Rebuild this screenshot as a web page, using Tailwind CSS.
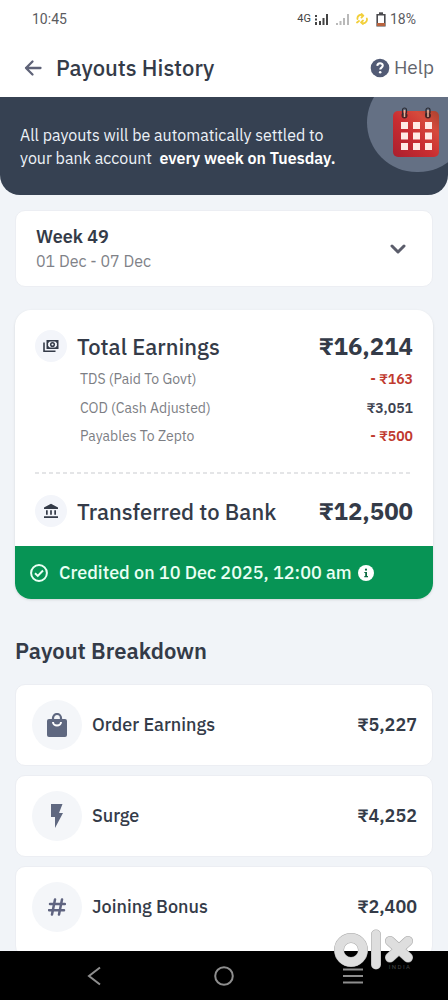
<!DOCTYPE html>
<html lang="en">
<head>
<meta charset="utf-8">
<meta name="viewport" content="width=device-width, initial-scale=1">
<title>Payouts History</title>
<script src="https://cdn.jsdelivr.net/npm/@tailwindcss/browser@4"></script>
</head>
<body class="flex h-screen flex-col overflow-hidden bg-[#f1f4f8] font-['IBM_Plex_Sans','Noto_Sans',sans-serif] text-[#343b48]">

<div class="flex h-[38px] shrink-0 items-center justify-between bg-white pr-8 pl-8 font-[Roboto,sans-serif] text-[14px] text-[#5b5b5f]">
  <span>10:45</span>
  <div class="flex items-center">
    <span class="text-[11px] text-[#444]">4G</span>
    <svg class="ml-1 h-3 w-[14px]" viewBox="0 0 14 12" fill="#444" aria-hidden="true"><path d="M0 2h2v2H0zM0 5.500h2v2H0zM0 9h2v3H0zM4 8h2v4H4zM7.500 5h2v7h-2zM11 1h2v11h-2z"/></svg>
    <svg class="ml-[7px] h-3 w-[13px]" viewBox="0 0 13 12" fill="#b9b9b9" aria-hidden="true"><path d="M0 10h2v2H0zM3.500 8h2v4h-2zM7 5h2v7H7zM11 1h2v11h-2z"/></svg>
    <svg class="ml-[7px] h-3 w-3" viewBox="0 0 12 12" fill="none" stroke="#f2cf3a" stroke-width="1.800" stroke-linecap="round" stroke-linejoin="round" aria-hidden="true"><path d="M1.500 6a3.500 3.500 0 0 1 5.500-3.500M5.500 1 7.300 2.700 5.500 4.500M10.800 5.500a3.500 3.500 0 0 1-5.500 3.800M7 7.500 5 9.300 7 11M1 9.500 3 8"/></svg>
    <svg class="ml-2 h-[15px] w-[10px]" viewBox="0 0 10 15" fill="none" aria-hidden="true"><path d="M1.200 2.700h7.600v11.100H1.200z" stroke="#4a4a4e" stroke-width="1.600"/><path d="M3 .3h4v2H3z" fill="#4a4a4e"/><path d="M1 11h8v3H1z" fill="#b8633e"/></svg>
    <span class="ml-1">18%</span>
  </div>
</div>

<header class="flex h-[59px] shrink-0 items-center justify-between bg-white pr-[14px] pl-6">
  <div class="flex items-center gap-[14px]">
    <button type="button" aria-label="Back"><svg class="h-[18px] w-[18px]" viewBox="0 0 18 18" fill="none" stroke="#5f6378" stroke-width="2.300" stroke-linecap="round" stroke-linejoin="round"><path d="M16.500 9H2M8.500 2.500 2 9l6.500 6.500"/></svg></button>
    <h1 class="text-[22px] leading-7 font-medium">Payouts History</h1>
  </div>
  <button type="button" class="flex items-center gap-1 text-[19px] text-[#63656d]">
    <svg class="h-5 w-5" viewBox="0 0 20 20" aria-hidden="true"><circle cx="10" cy="10" r="9.300" fill="#525b75"/><path d="M7.300 7.900c.1-3.500 5.500-3.400 5.500-.3 0 2-2.600 2-2.600 4" fill="none" stroke="#fff" stroke-width="2"/><circle cx="10.200" cy="14.300" r="1.250" fill="#fff"/></svg>
    Help
  </button>
</header>

<main class="min-h-0 flex-1 overflow-hidden">
  <section class="relative h-[98px] overflow-hidden rounded-b-[20px] bg-[#364152] px-5 pt-[27px] text-base leading-[23px] text-[#edf2f8]">
    <p>All payouts will be automatically settled to<br>your bank account &nbsp;<strong class="font-semibold text-white">every week on Tuesday.</strong></p>
    <div class="absolute -top-6 -right-5 h-[99px] w-[101px] rounded-full bg-[#647084]"></div>
    <svg class="absolute top-[9px] right-[9px] h-[52px] w-[46px]" viewBox="0 0 46 52" aria-hidden="true">
      <defs><linearGradient id="cal" x1="0" y1="1" x2="1" y2="0"><stop offset="0" stop-color="#a91f2e"/><stop offset=".45" stop-color="#c92d31"/><stop offset=".75" stop-color="#d64b3c"/><stop offset="1" stop-color="#a8422f"/></linearGradient></defs>
      <rect y="5" width="46" height="46" rx="5" fill="url(#cal)"/>
      <g fill="#ffeae4"><path d="M8 16h7v7H8zM20 16h7v7h-7zM32 16h7v7h-7zM8 26.500h7v7H8zM20 26.500h7v7h-7zM32 26.500h7v7h-7zM8 37h7v7H8zM20 37h7v7h-7zM32 37h7v7h-7z"/></g>
      <g fill="#4a2426"><circle cx="11.500" cy="9.500" r="3"/><circle cx="35" cy="9.500" r="3"/></g>
      <g fill="none" stroke="#292a32" stroke-width="1.200"><path d="M9.500 9V4a2 2 0 0 1 4 0v3M33 9V4a2 2 0 0 1 4 0v3"/></g>
      <g stroke="#e3b49c" stroke-width="1.500"><path d="M11.500 4v7M35 4v7"/></g>
    </svg>
  </section>

  <div class="px-[15px] pt-[15px]">
    <button type="button" class="flex h-[77px] w-full items-center justify-between rounded-[10px] border border-[#eceef3] bg-white pr-[26px] pl-5 text-left">
      <span>
        <span class="block text-lg leading-6 font-semibold">Week 49</span>
        <span class="block text-base leading-6 text-[#808288]">01 Dec - 07 Dec</span>
      </span>
      <svg class="h-[10px] w-4" viewBox="0 0 16 10" fill="none" stroke="#5b5d6b" stroke-width="3" stroke-linecap="round" stroke-linejoin="round" aria-hidden="true"><path d="m2 2 6 6 6-6"/></svg>
    </button>

    <section class="mt-[23px] overflow-hidden rounded-2xl bg-white shadow-sm">
      <div class="px-5 pt-5 pb-[19px]">
        <div class="flex h-8 items-center">
          <span class="flex h-8 w-8 items-center justify-center rounded-full bg-[#f3f5fa]">
            <svg class="h-[14px] w-4" viewBox="0 0 16 14" fill="none" stroke="#343b48" aria-hidden="true"><path d="M1 3.500v8.700h11.500" stroke-width="1.600"/><path d="M4.300 1.800h10.400v7.400H4.300z" stroke-width="1.600"/><circle cx="9.500" cy="5.500" r="1.800" stroke-width="1.500"/><path d="M4.500 3.800 6.300 2M14.500 3.800 12.700 2M4.500 7.200 6.300 9M14.500 7.200 12.700 9" stroke-width="1.200"/></svg>
          </span>
          <h2 class="ml-[10px] flex-1 text-[22px] font-medium">Total Earnings</h2>
          <span class="text-2xl font-bold">₹16,214</span>
        </div>
        <dl class="pt-[3px] pl-[45px] text-sm leading-5 text-[#7c7e84]">
          <div class="flex h-[28px] items-center justify-between"><dt>TDS (Paid To Govt)</dt><dd class="font-semibold text-[#c0392e]">- ₹163</dd></div>
          <div class="flex h-[29px] items-center justify-between"><dt>COD (Cash Adjusted)</dt><dd class="font-semibold text-[#3d4250]">₹3,051</dd></div>
          <div class="flex h-[28px] items-center justify-between"><dt>Payables To Zepto</dt><dd class="font-semibold text-[#c0392e]">- ₹500</dd></div>
        </dl>
        <svg class="mt-[22px] block h-[2px] w-full" aria-hidden="true"><path d="M0 1h2000" stroke="#dcdde0" stroke-width="1.500" stroke-dasharray="4 3"/></svg>
        <div class="mt-[21px] flex h-8 items-center">
          <span class="flex h-8 w-8 items-center justify-center rounded-full bg-[#f3f5fa]">
            <svg class="h-4 w-4" viewBox="0 0 16 16" fill="#343b48" aria-hidden="true"><path d="M8 .7 15 4.500V6H1V4.500zM3 7.300h1.700v4.500H3zM7.150 7.300h1.700v4.500h-1.700zM11.300 7.300H13v4.500h-1.700zM1 13.200h14v1.700H1z"/></svg>
          </span>
          <h2 class="ml-[10px] flex-1 text-[22px] font-medium">Transferred to Bank</h2>
          <span class="text-2xl font-bold">₹12,500</span>
        </div>
      </div>
      <div class="flex h-[53px] items-center bg-[#079455] pl-[15px] text-lg font-medium text-[#e9fff3]">
        <svg class="h-[18px] w-[18px]" viewBox="0 0 18 18" fill="none" stroke="currentColor" stroke-width="2" aria-hidden="true"><circle cx="9" cy="9" r="7.900"/><path d="m5 9.200 2.800 2.700L13 6.500"/></svg>
        <p class="ml-[11px]">Credited on 10 Dec 2025, 12:00 am</p>
        <button type="button" class="ml-[6px]" aria-label="More information"><svg class="h-4 w-4" viewBox="0 0 16 16"><circle cx="8" cy="8" r="8" fill="#fff"/><g fill="#0b6b42"><circle cx="8" cy="4.700" r="1.100"/><path d="M6.300 6.900H9V11h1v1.200H6.300V11h.9V8.100h-.9z"/></g></svg></button>
      </div>
    </section>

    <h2 class="mt-[38px] text-[22px] leading-7 font-semibold">Payout Breakdown</h2>

    <ul class="mt-[19px] flex flex-col gap-[9px] text-lg font-medium">
      <li class="flex h-[82px] items-center rounded-[10px] border border-[#eceef3] bg-white pr-[15px] pl-4">
        <span class="flex h-[50px] w-[50px] items-center justify-center rounded-full bg-[#f4f6f9]">
          <svg class="h-6 w-5" viewBox="0 0 20 24" aria-hidden="true"><path d="M6 7V5a4 4 0 0 1 8 0v2" fill="none" stroke="#5f6880" stroke-width="2.200"/><rect y="6" width="20" height="18" rx="2" fill="#5f6880"/><path d="M6 9a4 3.500 0 0 0 8 0" fill="none" stroke="#fff" stroke-width="2"/></svg>
        </span>
        <span class="ml-[10px] flex-1">Order Earnings</span>
        <span class="font-semibold">₹5,227</span>
      </li>
      <li class="flex h-[82px] items-center rounded-[10px] border border-[#eceef3] bg-white pr-[15px] pl-4">
        <span class="flex h-[50px] w-[50px] items-center justify-center rounded-full bg-[#f4f6f9]">
          <svg class="h-6 w-3" viewBox="0 0 12 24" fill="#5f6880" aria-hidden="true"><path d="M0 0h11.500L8 9h4L4 24V13H0z"/></svg>
        </span>
        <span class="ml-[10px] flex-1">Surge</span>
        <span class="font-semibold">₹4,252</span>
      </li>
      <li class="flex h-[90px] items-center rounded-[10px] border border-[#eceef3] bg-white pr-[15px] pb-2 pl-4">
        <span class="flex h-[50px] w-[50px] items-center justify-center rounded-full bg-[#f4f6f9]">
          <svg class="h-[18px] w-[18px]" viewBox="0 0 18 18" fill="none" stroke="#5f6480" stroke-width="2.500" stroke-linecap="round" aria-hidden="true"><path d="M7 1.500 4 16.500M14 1.500l-3 15M2 6h15M1 12.200h15"/></svg>
        </span>
        <span class="ml-[10px] flex-1">Joining Bonus</span>
        <span class="font-semibold">₹2,400</span>
      </li>
    </ul>
  </div>
</main>

<nav class="relative flex h-[49px] shrink-0 items-center justify-between bg-black px-[85px]">
  <button type="button" aria-label="Back"><svg class="h-5 w-5" viewBox="0 0 20 20" fill="none" stroke="#8e8e8e" stroke-width="2"><path d="M15 1.500 4 10l11 8.500"/></svg></button>
  <button type="button" aria-label="Home"><svg class="h-5 w-5" viewBox="0 0 20 20" fill="none" stroke="#8e8e8e" stroke-width="2"><circle cx="10" cy="10" r="8.800"/></svg></button>
  <button type="button" aria-label="Recent apps"><svg class="h-4 w-5" viewBox="0 0 20 16" fill="none" stroke="#8e8e8e" stroke-width="2"><path d="M0 1.500h20M0 8h20M0 14.500h20"/></svg></button>
  <svg class="pointer-events-none absolute -top-[22px] right-[34px] h-[44px] w-[80px]" viewBox="0 0 80 44" fill="none" role="img" aria-label="Marketplace logo"><g stroke="#a9a9a9"><circle cx="17" cy="21" r="12" stroke-width="10"/><path d="M42 5.500v30M56 12l18 16.500M74 12 56 28.500" stroke-width="10" stroke-linecap="round"/></g><g stroke="#dedede"><circle cx="17" cy="21" r="12" stroke-width="9"/><path d="M42 5.500v30M56 12l18 16.500M74 12 56 28.500" stroke-width="9" stroke-linecap="round"/></g></svg>
  <span class="absolute top-3 right-[38px] font-[Roboto,sans-serif] text-[6px] leading-2 text-[#444]">I N D I A</span>
</nav>
</body>
</html>
